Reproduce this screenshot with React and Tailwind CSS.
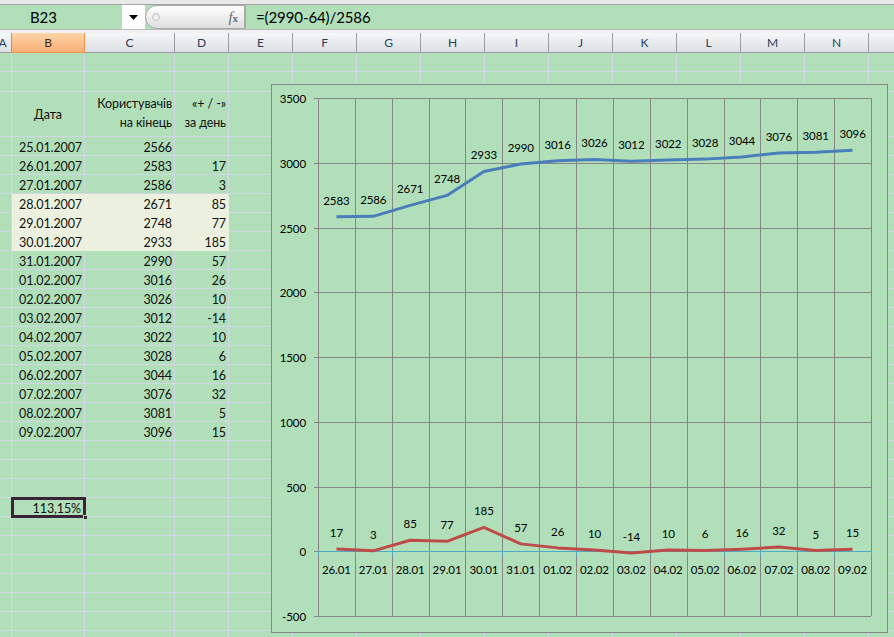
import React from "react";

const widths = ["w-[12px]", "w-[73px]", "w-[90px]", "w-[54px]", "w-[64px]", "w-[64px]", "w-[64px]", "w-[64px]", "w-[64px]", "w-[64px]", "w-[64px]", "w-[64px]", "w-[64px]", "w-[64px]", "w-[64px]"];
const letters = ["A", "B", "C", "D", "E", "F", "G", "H", "I", "J", "K", "L", "M", "N", ""];

const data = [
  ["25.01.2007", "2566", ""],
  ["26.01.2007", "2583", "17"],
  ["27.01.2007", "2586", "3"],
  ["28.01.2007", "2671", "85"],
  ["29.01.2007", "2748", "77"],
  ["30.01.2007", "2933", "185"],
  ["31.01.2007", "2990", "57"],
  ["01.02.2007", "3016", "26"],
  ["02.02.2007", "3026", "10"],
  ["03.02.2007", "3012", "-14"],
  ["04.02.2007", "3022", "10"],
  ["05.02.2007", "3028", "6"],
  ["06.02.2007", "3044", "16"],
  ["07.02.2007", "3076", "32"],
  ["08.02.2007", "3081", "5"],
  ["09.02.2007", "3096", "15"],
];

const users = [2583, 2586, 2671, 2748, 2933, 2990, 3016, 3026, 3012, 3022, 3028, 3044, 3076, 3081, 3096];
const deltas = [17, 3, 85, 77, 185, 57, 26, 10, -14, 10, 6, 16, 32, 5, 15];
const cats = ["26.01", "27.01", "28.01", "29.01", "30.01", "31.01", "01.02", "02.02", "03.02", "04.02", "05.02", "06.02", "07.02", "08.02", "09.02"];

function EmptyCells({ from = 0 }) {
  return widths.slice(from).map((w, i) => (
    <div key={i} className={`${w} shrink-0 h-full border-r border-b border-[#d0d7e5]`} />
  ));
}

function DataRow({ row, hl }) {
  const cell = hl
    ? "bg-[#ebf1de] border-[#ebf1de]"
    : "border-[#d0d7e5]";
  return (
    <div className="flex h-[19px]">
      <div className="w-[12px] shrink-0 h-full border-r border-b border-[#d0d7e5]" />
      <div className={`w-[73px] shrink-0 h-full border-r border-b ${cell} flex items-end justify-end pr-[2px] leading-[14px]`}>{row[0]}</div>
      <div className={`w-[90px] shrink-0 h-full border-r border-b ${cell} flex items-end justify-end pr-[2px] leading-[14px]`}>{row[1]}</div>
      <div className={`w-[54px] shrink-0 h-full border-r border-b ${cell} flex items-end justify-end pr-[2px] leading-[14px]`}>{row[2]}</div>
      <EmptyCells from={4} />
    </div>
  );
}

function Chart() {
  const L = 318, R = 871, T = 98, B = 616;
  const cw = (R - L) / 15;
  const yv = (v) => T + (3500 - v) * ((B - T) / 4000);
  const cx = (i) => L + cw * (i + 0.5);
  const bluePts = users.map((v, i) => `${cx(i)},${yv(v)}`).join(" ");
  const redPts = deltas.map((v, i) => `${cx(i)},${yv(v)}`).join(" ");
  const ticks = [3500, 3000, 2500, 2000, 1500, 1000, 500, 0, -500];
  const zeroY = Math.round(yv(0)) + 0.5;
  return (
    <div className="absolute left-[271px] top-[84px] w-[617px] h-[549px] border border-[#878787] bg-[#b1dfba]">
      <svg width="615" height="547" className="block">
        <g transform="translate(-272,-85)" fontFamily="Lato, 'Open Sans', sans-serif" fontSize="11.5" fill="#000">
          {ticks.map((t) => {
            const y = Math.round(yv(t)) + 0.5;
            return (
              <g key={t}>
                {t !== 0 && <line x1={314} x2={R} y1={y} y2={y} stroke="#868686" strokeWidth="1" />}
                <text x={306} y={y + 4} textAnchor="end">{t}</text>
              </g>
            );
          })}
          {Array.from({ length: 16 }).map((_, i) => {
            const x = Math.round(L + cw * i) + 0.5;
            return <line key={i} x1={x} x2={x} y1={T} y2={B} stroke="#868686" strokeWidth="1" />;
          })}
          <line x1={314} x2={L} y1={zeroY} y2={zeroY} stroke="#868686" strokeWidth="1" />
          <line x1={L} x2={R} y1={zeroY} y2={zeroY} stroke="#4bacc6" strokeWidth="1" />
          {Array.from({ length: 16 }).map((_, i) => {
            const x = Math.round(L + cw * i) + 0.5;
            return <line key={"t" + i} x1={x} x2={x} y1={zeroY} y2={zeroY + 4} stroke="#4bacc6" strokeWidth="1" />;
          })}
          <polyline points={bluePts} fill="none" stroke="#4a7ebb" strokeWidth="3" strokeLinejoin="round" />
          <polyline points={redPts} fill="none" stroke="#be4b48" strokeWidth="3" strokeLinejoin="round" />
          {users.map((v, i) => (
            <text key={"u" + i} x={cx(i)} y={yv(v) - 12} textAnchor="middle">{v}</text>
          ))}
          {deltas.map((v, i) => (
            <text key={"d" + i} x={cx(i)} y={yv(v) - 12} textAnchor="middle">{v}</text>
          ))}
          {cats.map((c, i) => (
            <text key={"c" + i} x={cx(i)} y={574} textAnchor="middle">{c}</text>
          ))}
        </g>
      </svg>
    </div>
  );
}

export default function App() {
  const emptyBefore = 3;
  const emptyAfter = 11;
  return (
    <div className="relative w-[894px] h-[637px] overflow-hidden bg-[#b1dfba] font-['Lato','Open_Sans',sans-serif] text-[12.5px] text-[#111] tracking-[-0.1px]">
      {/* formula bar */}
      <div className="h-[5px] bg-[#e9e9e9] border-b border-[#a3a3a3]" />
      <div className="flex h-[25px] bg-[#b1dfba] border-b border-[#b9b9b9]">
        <div className="w-[122px] shrink-0 flex items-center pl-[30px] text-[15px] text-black">B23</div>
        <div className="w-[23px] shrink-0 bg-white flex items-center justify-center">
          <svg width="9" height="5" viewBox="0 0 9 5"><path d="M0 0h9L4.5 5z" fill="#000" /></svg>
        </div>
        <div className="w-[100px] shrink-0 h-full rounded-l-[12px] border border-[#a9a9a9] bg-gradient-to-b from-white to-[#dedede] flex items-center justify-between pl-[6px] pr-[6px]">
          <div className="w-[8px] h-[8px] rounded-full border border-[#c2c2c2] bg-gradient-to-b from-[#e5e5e5] to-[#f7f7f7]" />
          <span className="font-['Liberation_Serif',serif] italic text-[15px] text-[#6b6b6b] leading-none">f<span className="text-[11px] not-italic font-bold">x</span></span>
        </div>
        <div className="flex-1 flex items-center pl-[10px] text-[15px] text-black border-l border-[#a9a9a9]">=(2990-64)/2586</div>
      </div>
      <div className="h-[3px] bg-[#f1f1f1]" />
      {/* column headers */}
      <div className="flex h-[20px] text-[12px] text-[#283f5e]">
        {widths.map((w, i) => (
          <div
            key={i}
            className={`${w} shrink-0 h-full flex items-center justify-center overflow-hidden border-r border-b ${
              i === 1
                ? "bg-gradient-to-b from-[#fdd6a9] to-[#f8ad74] border-[#f0934c] text-[#3d2a1a]"
                : "bg-gradient-to-b from-[#f6f7f8] to-[#dcdfe3] border-[#9c9c9c]"
            }`}
          >
            {i === 0 ? <span className="ml-[-6px]">A</span> : letters[i]}
          </div>
        ))}
      </div>
      {/* rows 1,2 */}
      <div className="flex h-[19px]"><EmptyCells /></div>
      <div className="flex h-[20px]"><EmptyCells /></div>
      {/* header row */}
      <div className="flex h-[45px]">
        <div className="w-[12px] shrink-0 h-full border-r border-b border-[#d0d7e5]" />
        <div className="w-[73px] shrink-0 h-full border-r border-b border-[#d0d7e5] flex items-center justify-center pt-[3px]">Дата</div>
        <div className="w-[90px] shrink-0 h-full border-r border-b border-[#d0d7e5] flex flex-col items-end justify-center pr-[2px] pb-[2px] leading-[19px]">
          <span>Користувачів</span>
          <span>на кінець</span>
        </div>
        <div className="w-[54px] shrink-0 h-full border-r border-b border-[#d0d7e5] flex flex-col items-end justify-center pr-[2px] pb-[2px] leading-[19px]">
          <span>«+ / -»</span>
          <span>за день</span>
        </div>
        <EmptyCells from={4} />
      </div>
      {data.map((r, i) => (
        <DataRow key={i} row={r} hl={i >= 3 && i <= 5} />
      ))}
      {Array.from({ length: emptyBefore }).map((_, i) => (
        <div key={"e" + i} className="flex h-[19px]"><EmptyCells /></div>
      ))}
      <div className="flex h-[19px]">
        <div className="w-[12px] shrink-0 h-full border-r border-b border-[#d0d7e5]" />
        <div className="relative w-[73px] shrink-0 h-full border-r border-b border-[#d0d7e5] flex items-end justify-end pr-[3px] leading-[14px]">
          113,15%
          <div className="absolute left-[-1px] top-[-1px] w-[75px] h-[21px] border-[3px] border-[#3b2438]" />
          <div className="absolute right-[-4px] bottom-[-4px] w-[5px] h-[5px] bg-[#3b2438] border border-[#b1dfba]" />
        </div>
        <EmptyCells from={2} />
      </div>
      {Array.from({ length: emptyAfter }).map((_, i) => (
        <div key={"f" + i} className="flex h-[19px]"><EmptyCells /></div>
      ))}
      <Chart />
    </div>
  );
}
